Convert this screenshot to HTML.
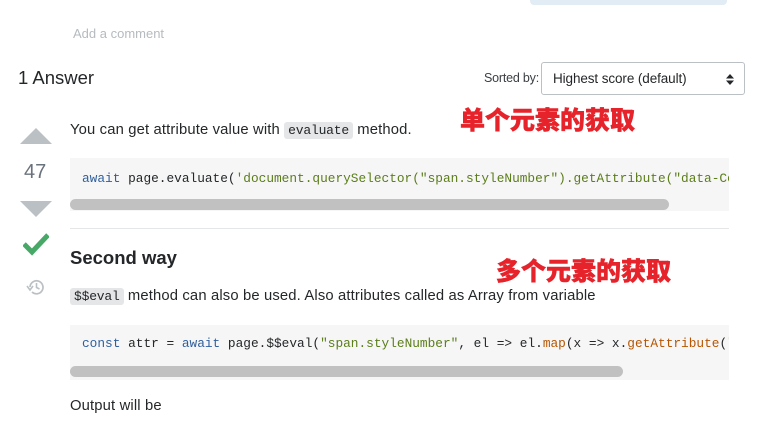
<!DOCTYPE html>
<html><head><meta charset="utf-8"><style>
*{margin:0;padding:0;box-sizing:border-box}
body{width:766px;height:421px;overflow:hidden;background:#fff;font-family:"Liberation Sans",sans-serif;color:#242729;position:relative}
.a{position:absolute;white-space:nowrap}
.p{font-size:14.8px;letter-spacing:0.15px;color:#242729}
.code{font-family:"Liberation Mono",monospace;font-size:12.8px;letter-spacing:0}
.ic{background:#e4e6e8;padding:1px 4px;border-radius:3px;font-family:"Liberation Mono",monospace;font-size:13px;letter-spacing:-0.2px}
.blk{position:absolute;left:70px;width:659px;background:#f6f6f6;overflow:hidden}
.sb{position:absolute;left:0;height:11px;background:#c1c1c1;border-radius:6px}
.cn{font-family:"Noto Sans CJK SC",sans-serif;font-weight:900;font-size:25px;color:#e6232b;-webkit-text-stroke:0.5px #e6232b;text-shadow:0 0 2px #fff,0 0 2px #fff}
.kw{color:#2f5f9e}.st{color:#5b7d1a}.fn{color:#b75501}
</style></head><body>
<div class="a" style="left:530px;top:0;width:197px;height:5px;background:#e1ecf4;border-radius:0 0 4px 4px"></div>
<div class="a" style="left:73px;top:26px;font-size:13px;color:#b6bbbf;letter-spacing:0">Add a comment</div>
<div class="a" style="left:18px;top:67px;font-size:18.5px;color:#242729;letter-spacing:0">1 Answer</div>
<div class="a" style="left:484px;top:71px;font-size:12.5px;color:#3b4045;letter-spacing:-0.2px">Sorted by:</div>
<div class="a" style="left:541px;top:62px;width:204px;height:33px;border:1px solid #bbc0c4;border-radius:3px;font-size:13.5px;padding:8px 0 0 11px;letter-spacing:-0.1px;color:#242729">Highest score (default)
<svg style="position:absolute;right:10px;top:11px" width="8" height="11"><path d="M0 4.5L4 0L8 4.5Z M0 6.5L4 11L8 6.5Z" fill="#242729"/></svg></div>
<div class="a cn" style="left:460px;top:101px">单个元素的获取</div>
<div class="a cn" style="left:496px;top:252px">多个元素的获取</div>
<svg class="a" style="left:20px;top:128px" width="32" height="16"><path d="M0 16L16 0L32 16Z" fill="#bbc0c4"/></svg>
<div class="a" style="left:24px;top:161px;font-size:20px;color:#6a737c">47</div>
<svg class="a" style="left:20px;top:201px" width="32" height="16"><path d="M0 0L16 16L32 0Z" fill="#bbc0c4"/></svg>
<svg class="a" style="left:23px;top:232px" width="26" height="24"><path d="M1 12L9 20L25 3" stroke="#48a868" stroke-width="5" fill="none"/></svg>
<svg class="a" style="left:26px;top:278px" width="19" height="18"><path d="M4 9A6.5 6.5 0 1 1 6 14" stroke="#bbc0c4" stroke-width="1.7" fill="none"/><path d="M1 8L4 12L7 8" stroke="#bbc0c4" stroke-width="1.6" fill="none"/><path d="M10.5 5V9.5L13.5 11" stroke="#bbc0c4" stroke-width="1.6" fill="none"/></svg>
<div class="a p" style="left:70px;top:122px">You can get attribute value with <span class="ic">evaluate</span> method.</div>
<div class="blk" style="top:158px;height:53px">
<div class="a code" style="left:12px;top:13px"><span class="kw">await</span> page.evaluate(<span class="st">'document.querySelector("span.styleNumber").getAttribute("data-Co</span></div>
<div class="sb" style="top:41px;width:599px"></div></div>
<div class="a" style="left:70px;top:228px;width:659px;height:1px;background:#e4e6e8"></div>
<div class="a" style="left:70px;top:247px;font-size:18.5px;font-weight:bold;color:#242729;letter-spacing:0">Second way</div>
<div class="a p" style="left:70px;top:288px"><span class="ic">$$eval</span> method can also be used. Also attributes called as Array from variable</div>
<div class="blk" style="top:325px;height:55px">
<div class="a code" style="left:12px;top:11px"><span class="kw">const</span> attr = <span class="kw">await</span> page.$$eval(<span class="st">"span.styleNumber"</span>, el =&gt; el.<span class="fn">map</span>(x =&gt; x.<span class="fn">getAttribute</span>(<span class="st">"</span></div>
<div class="sb" style="top:41px;width:553px"></div></div>
<div class="a p" style="left:70px;top:398px">Output will be</div>
</body></html>
